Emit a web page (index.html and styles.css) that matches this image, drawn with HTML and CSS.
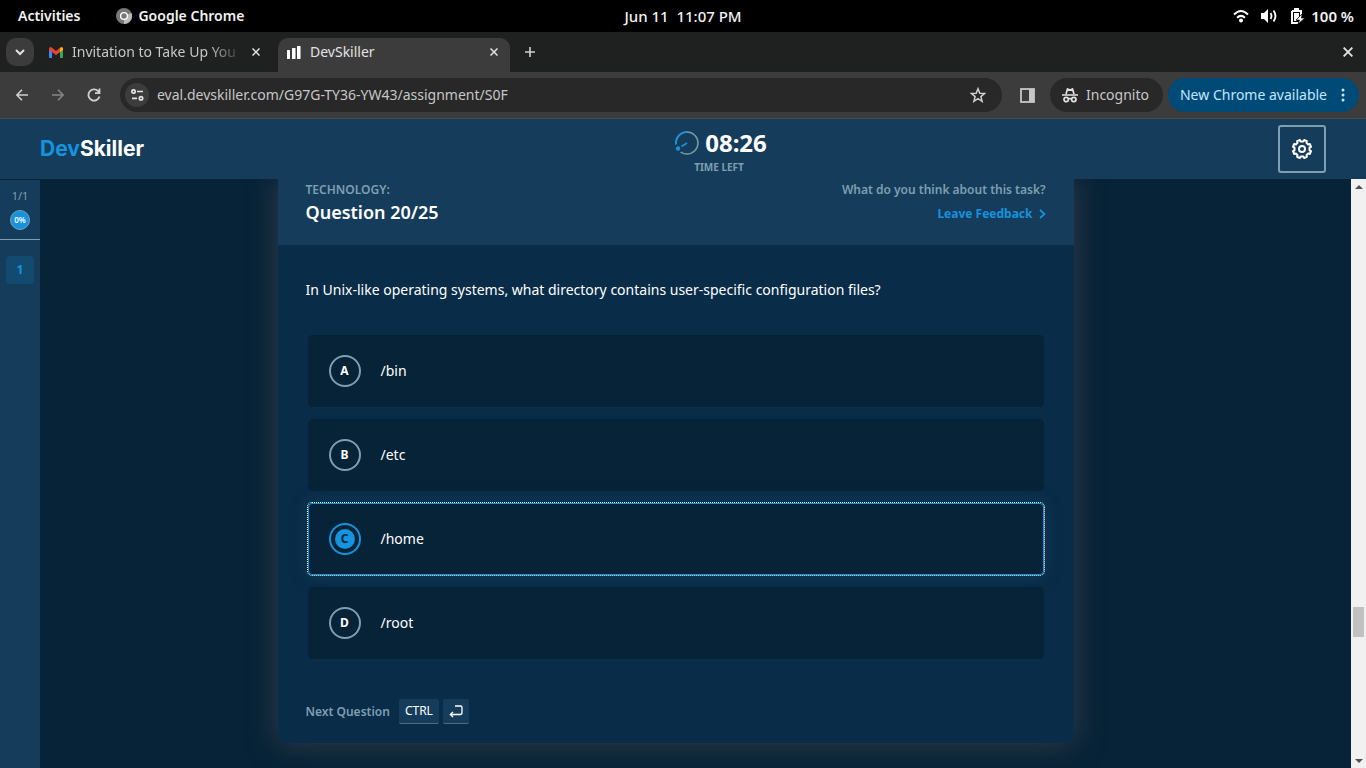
FILE: index.html
```html
<!DOCTYPE html>
<html lang="en">
<head>
<meta charset="utf-8">
<title>DevSkiller</title>
<link rel="stylesheet" href="styles.css">
</head>
<body>
<div class="system-bar">
  <div class="system-left">
    <button class="plain">Activities</button>
    <button class="plain current-app">
      <svg width="16" height="16" viewBox="0 0 16 16"><circle cx="8" cy="8" r="8" fill="#777"/><path d="M8 8 15.5 5A8 8 0 0 1 8 16z" fill="#bbb"/><circle cx="8" cy="8" r="3.4" fill="#777" stroke="#fff" stroke-width="1.4"/></svg>
      Google Chrome
    </button>
  </div>
  <time class="clock">Jun 11&nbsp; 11:07 PM</time>
  <div class="system-right">
    <svg width="16" height="14" viewBox="0 0 16 14" fill="none" stroke="#fff" stroke-width="2"><path d="M1 5.5Q8-1.5 15 5.500M4 8.800Q8 5 12 8.800"/><circle cx="8" cy="11.500" r="2" fill="#fff" stroke="none"/></svg>
    <svg width="17" height="16" viewBox="0 0 17 16" fill="none" stroke="#fff" stroke-width="1.8"><path d="M0 5h3l4-4v14l-4-4H0z" fill="#fff" stroke="none"/><path d="M9.500 5q2 3 0 6M12.500 2.500q4 5.500 0 11"/></svg>
    <svg width="15" height="16" viewBox="0 0 15 16"><path d="M4 1h5M2 3h9v5M8 15H2V3" fill="none" stroke="#fff" stroke-width="2"/><path d="M4 5h5v4l-3 4H4z" fill="#fff"/><path d="m12 6-6 6h3.500L8 16l7-6h-3.500z" fill="#fff" stroke="#000" stroke-width=".7"/></svg>
    <span>100 %</span>
  </div>
</div>

<div class="tab-strip">
  <button class="tab-search" aria-label="Search tabs"><svg width="10" height="7" viewBox="0 0 10 7" fill="none" stroke="#e3e3e3" stroke-width="2"><path d="m1 1 4 4 4-4"/></svg></button>
  <div class="tab">
    <svg width="14" height="11" viewBox="0 0 14 11"><path d="M0 2v8q0 1 1 1h2V4z" fill="#4285f4"/><path d="M14 2v8q0 1-1 1h-2V4z" fill="#34a853"/><path d="M0 2Q0 0 2 0l5 4 5-4q2 0 2 2v1L7 8 0 3z" fill="#ea4335"/><path d="M11 1q3-2 3 1v1l-3 2z" fill="#fbbc04"/></svg>
    <span class="tab-title faded">Invitation to Take Up You</span>
    <button class="plain close" aria-label="Close tab"><svg width="8" height="8" viewBox="0 0 8 8"><path d="m.5.5 7 7m0-7-7 7"/></svg></button>
  </div>
  <div class="tab active">
    <svg width="14" height="13" viewBox="0 0 14 13" fill="#fff"><rect y="4" width="3" height="9" rx=".5"/><rect x="5" y="2" width="3.500" height="11" rx=".5"/><rect x="10" width="3.500" height="13" rx=".5"/></svg>
    <span class="tab-title">DevSkiller</span>
    <button class="plain close" aria-label="Close tab"><svg width="8" height="8" viewBox="0 0 8 8"><path d="m.5.5 7 7m0-7-7 7"/></svg></button>
  </div>
  <button class="plain new-tab" aria-label="New tab"><svg width="10" height="10" viewBox="0 0 10 10" stroke="#d0d0d0" stroke-width="1.600"><path d="M5 0v10M0 5h10"/></svg></button>
  <button class="plain close window-close" aria-label="Close window"><svg width="10" height="10" viewBox="0 0 8 8"><path d="m.5.5 7 7m0-7-7 7"/></svg></button>
</div>

<div class="toolbar">
  <button class="plain nav" aria-label="Back"><svg width="12" height="12" viewBox="0 0 12 12" fill="none" stroke="#d0d0d0" stroke-width="1.600"><path d="M12 6H1M6 .7.9 6 6 11.300"/></svg></button>
  <button class="plain nav" aria-label="Forward"><svg width="12" height="12" viewBox="0 0 12 12" fill="none" stroke="#858585" stroke-width="1.600"><path d="M0 6h11M6 .7 11.100 6 6 11.300"/></svg></button>
  <button class="plain nav" aria-label="Reload"><svg width="14" height="14" viewBox="0 0 14 14" fill="none" stroke="#d0d0d0" stroke-width="1.800"><path d="M12.500 8.500A5.600 5.600 0 1 1 11 3l1.500 1.500M12.500.500v4.700H8"/></svg></button>
  <div class="address">
    <button class="site-info" aria-label="Site information"><svg width="13" height="12" viewBox="0 0 13 12" fill="none" stroke="#e3e3e3" stroke-width="1.700"><circle cx="2.500" cy="2.500" r="1.700"/><path d="M6 2.500h6M1 9.300h5"/><circle cx="10" cy="9.300" r="1.700"/></svg></button>
    <input class="url" aria-label="Address" value="eval.devskiller.com/G97G-TY36-YW43/assignment/S0F">
    <button class="plain" aria-label="Bookmark"><svg width="16" height="16" viewBox="0 0 16 16" fill="none" stroke="#d0d0d0" stroke-width="1.500"><path d="m8 1.700 1.800 4.500 4.800.3-3.700 3.100 1.200 4.700L8 11.700l-4.100 2.600 1.200-4.700L1.400 6.500l4.800-.3z"/></svg></button>
  </div>
  <button class="plain side-panel" aria-label="Side panel"><svg width="15" height="15" viewBox="0 0 15 15"><rect x="1" y="1" width="13" height="13" fill="none" stroke="#c7c7c7" stroke-width="1.800"/><path d="M9 1h5v13H9z" fill="#c7c7c7"/></svg></button>
  <button class="pill incognito"><svg width="16" height="15" viewBox="0 0 16 15" fill="none" stroke="#e3e3e3" stroke-width="1.700"><path d="M4 6 5.500 1 8 2l2.500-1L12 6M0 7h16"/><circle cx="4.200" cy="11.500" r="2.200"/><circle cx="11.800" cy="11.500" r="2.200"/><path d="M6 11q2-1 4 0"/></svg>Incognito</button>
  <button class="pill update">New Chrome available<svg width="4" height="14" viewBox="0 0 4 14" fill="#c2e7ff"><circle cx="2" cy="2" r="1.500"/><circle cx="2" cy="7" r="1.500"/><circle cx="2" cy="12" r="1.500"/></svg></button>
</div>

<header class="app-header">
  <a class="logo" href="#"><span>Dev</span>Skiller</a>
  <div class="timer">
    <div class="timer-value">
      <svg width="28" height="28" viewBox="0 0 28 28" fill="none"><circle cx="16" cy="14" r="11" stroke="#7799aa" stroke-width="1.500"/><path d="M16 3A11 11 0 0 0 5.300 17" stroke="#1593df" stroke-width="1.700"/><circle cx="7" cy="19.500" r="4.500" fill="#153d5b"/><path d="m16 14-5.500 3.400" stroke="#1593df" stroke-width="1.800"/><circle cx="7" cy="19.500" r="2.200" fill="#1593df"/></svg>
      <span>08:26</span>
    </div>
    <div class="timer-label">TIME LEFT</div>
  </div>
  <button class="settings" aria-label="Settings"><svg width="20" height="20" viewBox="0 0 20 20" fill="none" stroke="#fff" stroke-width="2" stroke-linejoin="round"><path d="m7.800 1 .9 1.500h2.600L12.200 1l2.700 1.100-.4 1.800 1.600 1.600 1.800-.4L19 7.800l-1.500.9v2.600l1.500.9-1.100 2.700-1.800-.4-1.600 1.600.4 1.800-2.700 1.100-.9-1.500H8.700L7.800 19l-2.700-1.100.4-1.800-1.600-1.600-1.800.4L1 12.200l1.500-.9V8.700L1 7.800l1.100-2.700 1.800.4 1.600-1.600-.4-1.800z"/><circle cx="10" cy="10" r="3"/></svg></button>
</header>

<div class="workspace">
  <nav class="sidebar" aria-label="Tasks">
    <div class="progress"><span>1/1</span><span class="percent">0%</span></div>
    <a class="task" href="#">1</a>
  </nav>
  <main class="content">
    <section class="card">
      <div class="card-header">
        <div>
          <div class="muted">TECHNOLOGY:</div>
          <h1 class="title">Question 20/25</h1>
        </div>
        <div class="feedback">
          <div class="muted">What do you think about this task?</div>
          <a class="feedback-link" href="#">Leave Feedback <svg width="7" height="10" viewBox="0 0 7 10" fill="none" stroke="#1593df" stroke-width="1.700"><path d="m1 1 4.500 4L1 9"/></svg></a>
        </div>
      </div>
      <form class="card-body">
        <p class="question" id="question">In Unix-like operating systems, what directory contains user-specific configuration files?</p>
        <div class="options" role="radiogroup" aria-labelledby="question">
          <label class="option"><span class="choice"><input type="radio" name="answer"><b>A</b></span>/bin</label>
          <label class="option"><span class="choice"><input type="radio" name="answer"><b>B</b></span>/etc</label>
          <label class="option selected"><span class="choice"><input type="radio" name="answer" checked><b>C</b></span>/home</label>
          <label class="option"><span class="choice"><input type="radio" name="answer"><b>D</b></span>/root</label>
        </div>
        <div class="next">
          <span class="muted">Next Question</span>
          <kbd>CTRL</kbd>
          <kbd aria-label="Enter"><svg width="14" height="13" viewBox="0 0 14 13" fill="none" stroke="#fff" stroke-width="1.300"><path d="M6 1h5.500q1.500 0 1.500 1.500v5Q13 9.500 11 9.500H1.500M4 7 1.300 9.500 4 12"/></svg></kbd>
        </div>
      </form>
    </section>
  </main>
  <div class="scrollbar" aria-hidden="true">
    <span class="arrow up"></span>
    <span class="before-thumb"></span>
    <span class="thumb"></span>
    <span class="after-thumb"></span>
    <span class="arrow down"></span>
  </div>
</div>
</body>
</html>
```
FILE: styles.css
```css
* { box-sizing: border-box; }
body {
  margin: 0;
  height: 100vh;
  display: flex;
  flex-direction: column;
  overflow: hidden;
  background: #072337;
  color: #fff;
  font: 14px/20px "Noto Sans", sans-serif;
}
button { font: inherit; color: inherit; border: 0; padding: 0; cursor: pointer; }
svg { display: block; flex: none; }
a { text-decoration: none; }
.plain { background: none; }

/* Desktop bar */
.system-bar {
  flex: none;
  height: 32px;
  display: grid;
  grid-template-columns: 1fr auto 1fr;
  align-items: center;
  padding: 0 12px;
  background: #000;
  color: #f2f2f2;
  font-weight: 600;
}
.system-left, .system-right { display: flex; align-items: center; }
.system-left { gap: 36px; padding-left: 6px; }
.system-right { gap: 12px; justify-content: flex-end; }
.system-right span { margin-left: -6px; font-size: 15px; }
.clock { font-size: 15px; font-weight: 500; }
.current-app { display: flex; align-items: center; gap: 6px; }

/* Browser tabs */
.tab-strip {
  flex: none;
  height: 40px;
  display: flex;
  align-items: center;
  padding: 0 13px 0 6px;
  background: #1f2020;
  color: #c7c7c7;
}
.tab-search {
  width: 28px;
  height: 28px;
  display: grid;
  place-items: center;
  border-radius: 10px;
  background: #3c3c3c;
}
.tab {
  height: 34px;
  width: 230px;
  align-self: flex-end;
  display: flex;
  align-items: center;
  gap: 9px;
  margin-left: 7px;
  padding: 0 11px 6px 8px;
}
.tab.active {
  width: 232px;
  border-radius: 10px 10px 0 0;
  background: #3c3c3c;
  color: #e3e3e3;
  padding: 0 12px 6px 9px;
}
.tab-title { flex: 1; white-space: nowrap; }
.faded { mask-image: linear-gradient(90deg, #000 80%, transparent); }
.close svg { stroke: #e3e3e3; stroke-width: 1.5; }
.new-tab { margin-left: 15px; }
.window-close { margin-left: auto; }

/* Browser toolbar */
.toolbar {
  flex: none;
  height: 47px;
  display: flex;
  align-items: center;
  padding: 0 7px 0 4px;
  background: #3c3c3c;
  border-bottom: 1px solid #4b4b4b;
}
.nav { width: 36px; height: 34px; display: grid; place-items: center; }
.address {
  flex: 1;
  height: 34px;
  display: flex;
  align-items: center;
  gap: 8px;
  margin-left: 8px;
  padding: 0 16px 0 5px;
  border-radius: 17px;
  background: #282828;
}
.site-info {
  width: 24px;
  height: 24px;
  display: grid;
  place-items: center;
  border-radius: 50%;
  background: #3c3c3c;
}
.url {
  flex: 1;
  min-width: 0;
  padding: 0;
  border: 0;
  outline: 0;
  background: none;
  color: #c7c7c7;
  font: inherit;
}
.side-panel { margin: 0 15px 0 18px; }
.pill {
  height: 34px;
  display: flex;
  align-items: center;
  gap: 8px;
  border-radius: 17px;
  white-space: nowrap;
}
.incognito { padding: 0 14px 0 12px; background: #282828; color: #c7c7c7; }
.update { gap: 14px; margin-left: 5px; padding: 0 14px 0 12px; background: #004a77; color: #c2e7ff; }

/* Assessment header */
.app-header {
  flex: none;
  height: 60px;
  display: flex;
  align-items: center;
  justify-content: space-between;
  padding: 0 40px;
  background: #153d5b;
}
.logo { width: 120px; color: #fff; font: 700 21px/24px Inter, sans-serif; }
.logo span { color: #1593df; }
.timer { display: flex; flex-direction: column; align-items: center; padding-top: 8px; }
.timer-value { display: flex; align-items: center; gap: 6px; font-size: 24px; font-weight: 700; line-height: 28px; }
.timer-label { color: #7d9fb1; font-size: 10px; font-weight: 700; }
.settings {
  width: 48px;
  height: 48px;
  display: grid;
  place-items: center;
  border: 2px solid #7d9fb1;
  border-radius: 3px;
  background: none;
}

/* Workspace */
.workspace { flex: 1; min-height: 0; display: flex; }
.sidebar { width: 40px; background: #153d5b; border-top: 1px solid #072337; }
.progress {
  height: 60px;
  display: flex;
  flex-direction: column;
  align-items: center;
  gap: 4px;
  padding-top: 6px;
  border-bottom: 1px solid #7d9fb1;
  color: #7d9fb1;
  font-size: 11px;
}
.percent {
  width: 20px;
  height: 20px;
  border: 1px solid #7d9fb1;
  border-radius: 50%;
  background: #1593df;
  color: #fff;
  font-size: 8px;
  font-weight: 600;
  line-height: 18px;
  text-align: center;
}
.task {
  display: block;
  margin: 16px 6px;
  border-radius: 4px;
  background: #134a70;
  color: #1593df;
  font-size: 12px;
  font-weight: 700;
  line-height: 28px;
  text-align: center;
}
.content { flex: 1; overflow: hidden; padding-right: 40px; }
.card {
  max-width: 796px;
  margin: 0 auto;
  border-radius: 0 0 8px 8px;
  background: #092c48;
  box-shadow: 0 0 30px #363e4a;
}
.card-header {
  height: 66px;
  display: flex;
  justify-content: space-between;
  padding: 1px 28px 0;
  background: #153d5b;
}
.muted { color: #7d9fb1; font-size: 12px; font-weight: 600; }
.title { margin: 0; font-size: 18px; font-weight: 600; line-height: 24px; }
.feedback { text-align: right; }
.feedback-link {
  display: flex;
  align-items: center;
  justify-content: flex-end;
  gap: 6px;
  color: #1593df;
  font-size: 12px;
  font-weight: 700;
  line-height: 28px;
}
.card-body { padding: 35px 28px 19px; }
.question { margin: 0 0 35px; }
.options { display: grid; gap: 12px; padding: 0 2px; }
.option {
  height: 72px;
  display: flex;
  align-items: center;
  gap: 20px;
  padding: 0 20px;
  border: 1px solid #072337;
  border-radius: 4px;
  background: #072337;
}
.option.selected { border-color: #1593df; outline: 1px dotted #fff; box-shadow: 0 0 16px #113f5b; }
.choice { display: grid; place-items: center; }
.choice input, .choice b { grid-area: 1 / 1; }
.choice input {
  appearance: none;
  width: 32px;
  height: 32px;
  margin: 0;
  border: 2px solid #7d9fb1;
  border-radius: 50%;
}
.choice input:checked { padding: 4px; border-color: #1593df; background: #1593df content-box; }
.choice b { font-size: 12px; pointer-events: none; z-index: 1; }
.selected .choice b { color: #072337; }
.next { display: flex; align-items: center; gap: 4px; margin-top: 40px; }
.next .muted { margin-right: 5px; }
kbd {
  height: 25px;
  display: grid;
  place-items: center;
  padding: 0 6px;
  border-bottom: 1px solid #4f6e84;
  border-radius: 2px;
  background: #153d5b;
  font: 12px/24px "Noto Sans", sans-serif;
}

/* Scrollbar */
.scrollbar { width: 15px; display: flex; flex-direction: column; align-items: center; background: #f1f1f1; }
.arrow { height: 15px; display: grid; place-items: center; }
.arrow::before { content: ""; border: 4px solid transparent; }
.up::before { border-top: 0; border-bottom-color: #505050; }
.down::before { border-bottom: 0; border-top-color: #505050; }
.before-thumb { flex: 413; }
.thumb { width: 11px; height: 30px; background: #c1c1c1; }
.after-thumb { flex: 116; }
```
